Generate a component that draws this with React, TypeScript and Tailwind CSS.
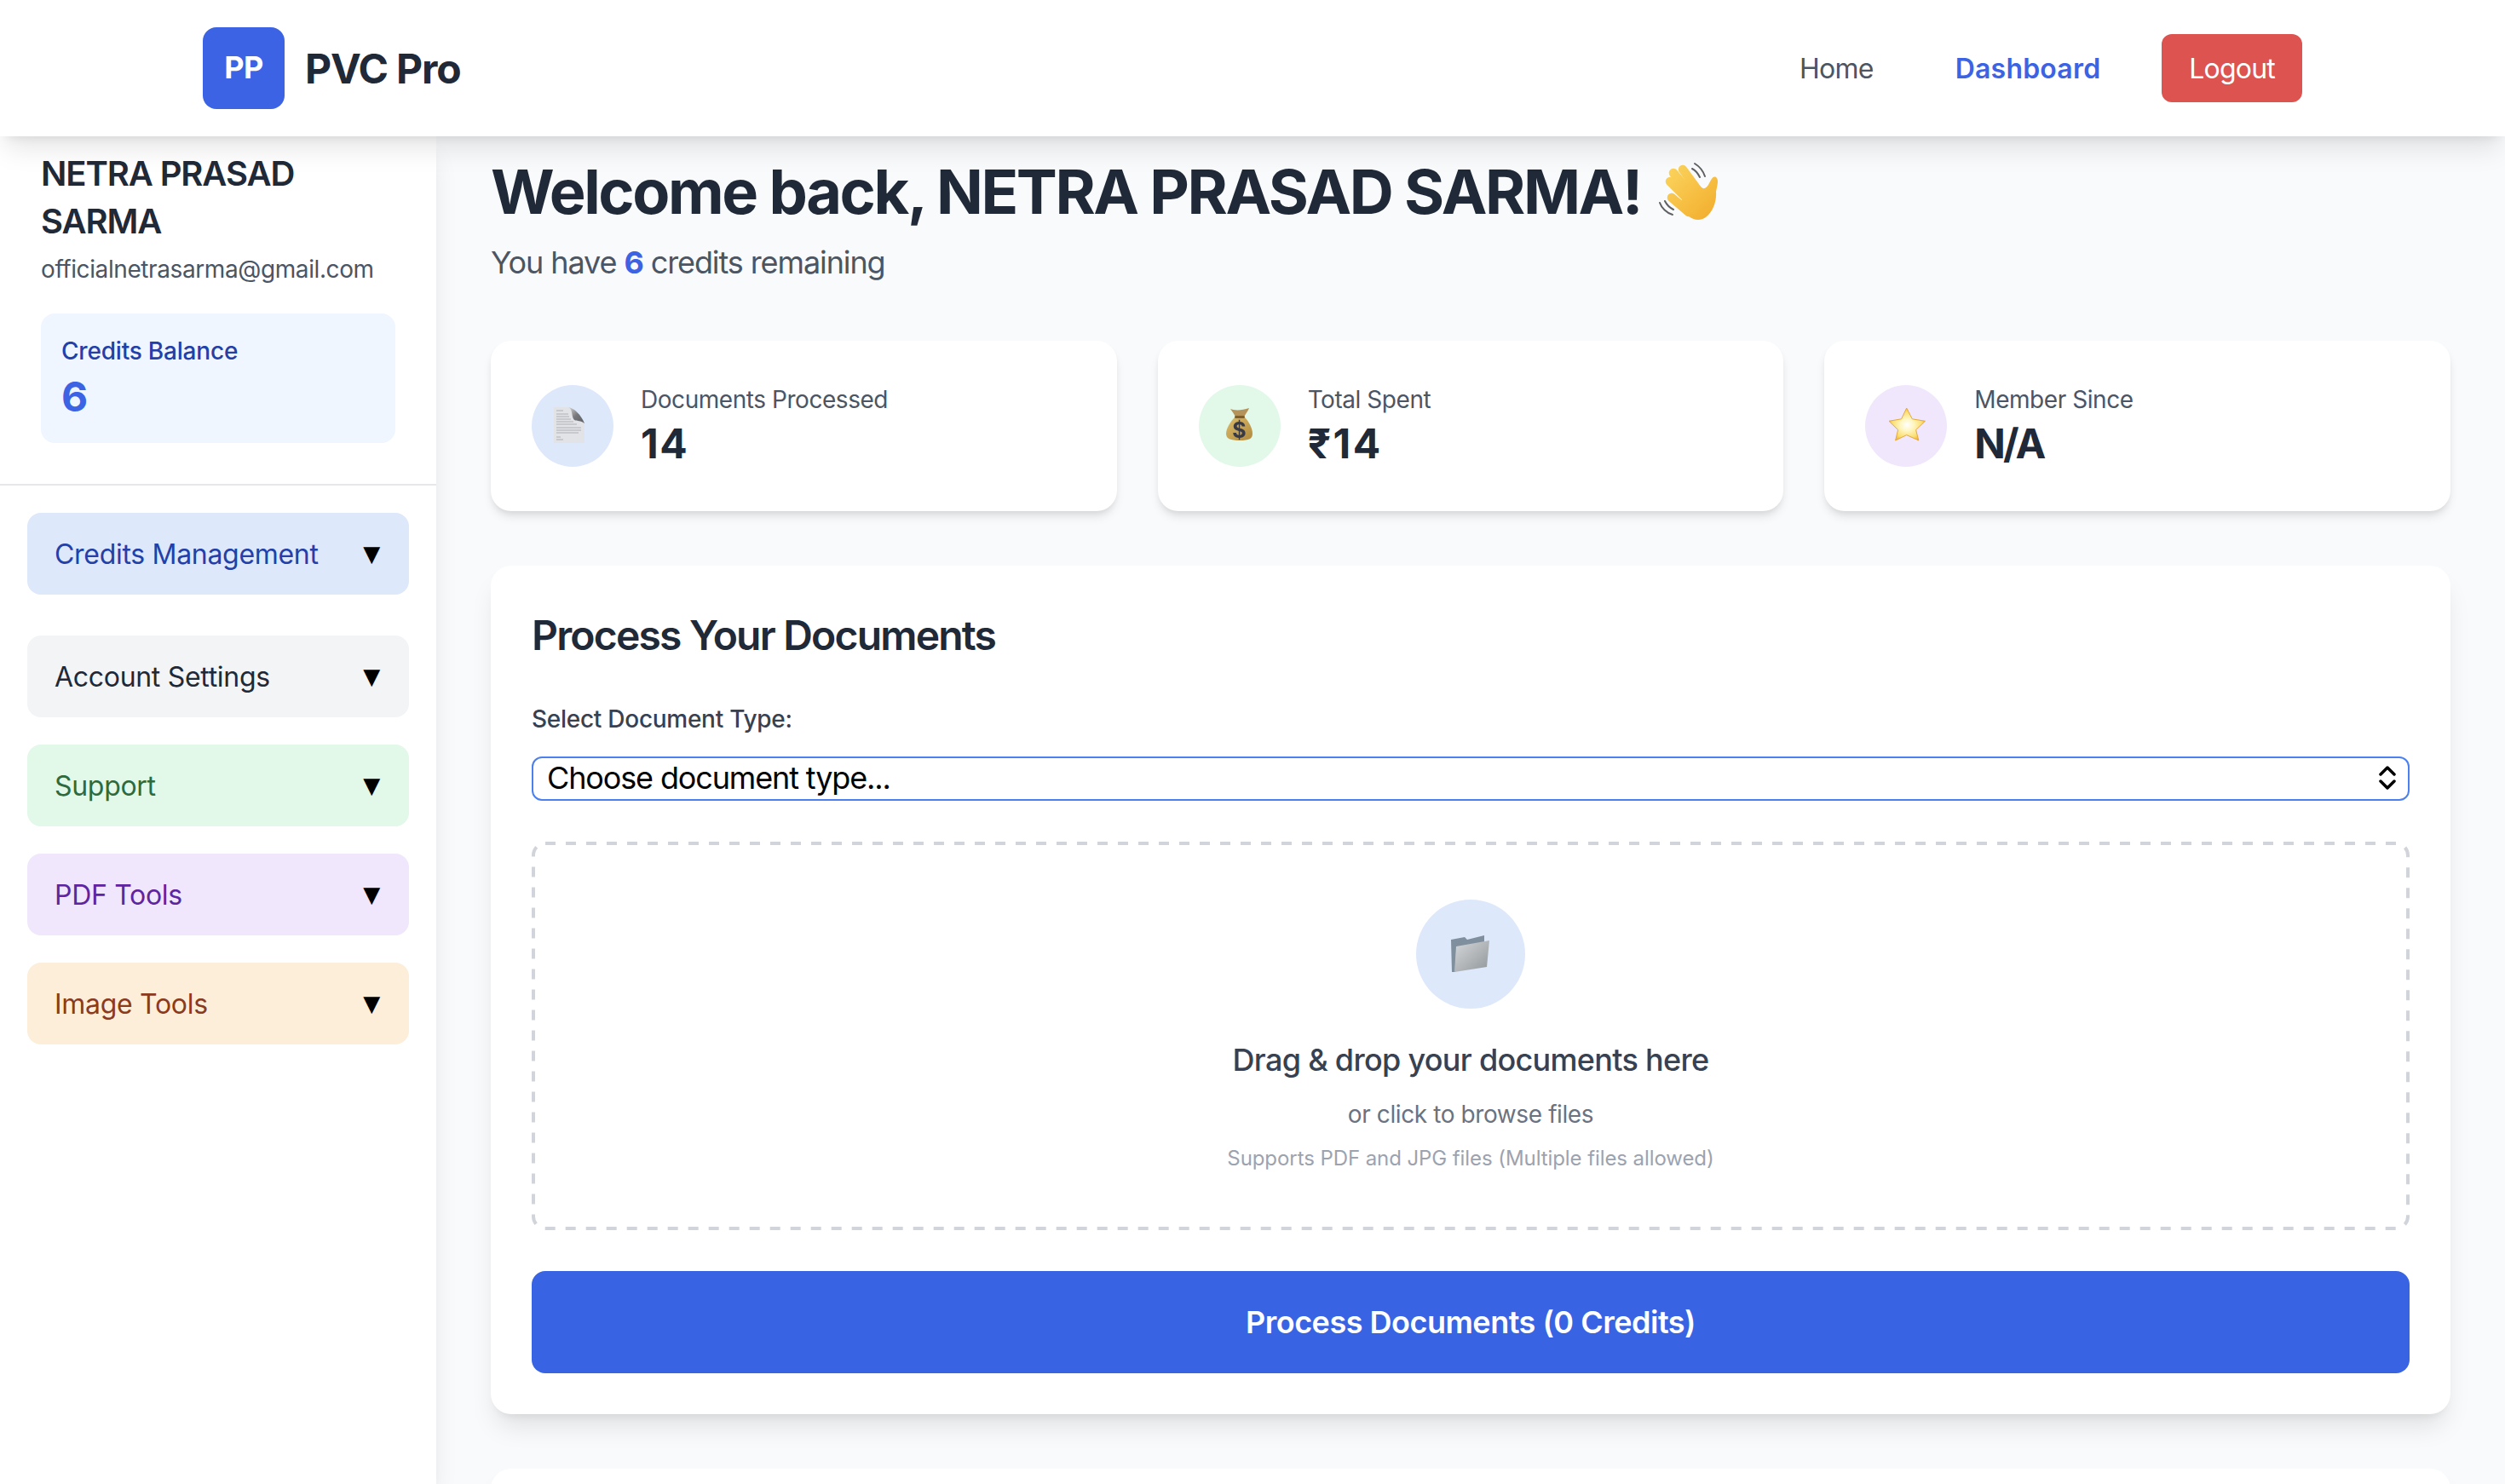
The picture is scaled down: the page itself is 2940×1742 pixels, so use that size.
const cardShadow = 'shadow-[0_8px_12px_-2px_rgba(0,0,0,0.1),0_4px_8px_-4px_rgba(0,0,0,0.1)]';

// Emoji in the original are bitmap glyphs, so they get drawn by hand here
const DocEmoji = () => (
  <svg width="70" height="70" viewBox="0 0 70 70" className="blur-[0.5px]">
    <defs>
      <linearGradient id="fold" x1="0" y1="0" x2="1" y2="1">
        <stop offset="0" stopColor="#d8d8d8" />
        <stop offset="0.5" stopColor="#77787b" />
        <stop offset="1" stopColor="#5c5d60" />
      </linearGradient>
    </defs>
    <path d="M13 13H31C35 13 35 20 37 25C39 29 44 29 49 31V55H13Z" fill="#e2e3e6" />
    <path d="M30 13C37 14 45 22 49 32C44 28 41 30 37 28C33 24 36 16 30 13Z" fill="url(#fold)" />
    <g stroke="#aeb0b5" strokeWidth="1">
      <path d="M16 17H24M16 21H30M16 24H31M16 27H33M16 30H36M16 33H40" />
      <path d="M16 37H45M16 40H45M16 43H42" />
      <path d="M16 48H21M16 51H24" />
    </g>
  </svg>
);

const BagEmoji = () => (
  <svg width="70" height="70" viewBox="0 0 70 70" className="blur-[0.3px]">
    <defs>
      <linearGradient id="bag" x1="0" y1="0" x2="1" y2="1">
        <stop offset="0" stopColor="#dcbc6c" />
        <stop offset="1" stopColor="#b08a3e" />
      </linearGradient>
    </defs>
    <path d="M24 15C28 17 38 17 46 14C45 18 41 21 40 25H30C29 21 26 18 24 15Z" fill="#b4925a" />
    <path d="M29 25H41C46 30 50 38 50 44C50 50 46 52 35 52C24 52 19 50 19 44C19 38 24 30 29 25Z" fill="url(#bag)" />
    <rect x="29" y="23" width="12" height="3" rx="1.5" fill="#7d5e2a" />
    <text x="34.5" y="49" textAnchor="middle" fontFamily="Inter, sans-serif" fontSize="25" fontWeight="700" fill="#3a3a42">$</text>
  </svg>
);

const StarEmoji = () => (
  <svg width="70" height="70" viewBox="0 0 70 70">
    <defs>
      <radialGradient id="star" cx="0.5" cy="0.52" r="0.55">
        <stop offset="0" stopColor="#ffffff" />
        <stop offset="0.35" stopColor="#fff6bf" />
        <stop offset="0.75" stopColor="#fbdc6e" />
        <stop offset="1" stopColor="#eeaa2c" />
      </radialGradient>
    </defs>
    <path d="M35.7 14L42.3 26.8L57.5 29.3L46.6 39.6L49.8 52L35.7 45.6L22.6 52L25.6 39.6L15 29.3L29.6 26.8Z" fill="url(#star)" stroke="#e6a93a" strokeWidth="1" strokeLinejoin="round" />
  </svg>
);

const FolderEmoji = () => (
  <svg width="48" height="46" viewBox="0 0 48 46">
    <defs>
      <linearGradient id="folder" x1="0" y1="0" x2="1" y2="1">
        <stop offset="0" stopColor="#d6d8da" />
        <stop offset="1" stopColor="#90969a" />
      </linearGradient>
    </defs>
    <path d="M1 6L17 3L20 6L40 1V10L6 44H2Z" fill="#7f8f9e" />
    <path d="M7 14L46 7L43 38L5 44Z" fill="url(#folder)" />
  </svg>
);

const WaveEmoji = () => (
  <svg width="90" height="90" viewBox="0 0 90 90" className="shrink-0">
    <defs>
      <linearGradient id="hand" gradientUnits="userSpaceOnUse" x1="25" y1="20" x2="80" y2="78">
        <stop offset="0" stopColor="#fbd35c" />
        <stop offset="1" stopColor="#f2ad2c" />
      </linearGradient>
    </defs>
    <g fill="none" stroke="#5f6062" strokeWidth="2" strokeLinecap="round">
      <path d="M57 13C62 16 67 22 69 28" />
      <path d="M54 19C58 21 61 25 63 29" />
      <path d="M16 59C18 65 24 71 31 73" />
      <path d="M22 57C24 61 28 65 32 67" />
    </g>
    <g stroke="url(#hand)" strokeWidth="10.5" strokeLinecap="round" fill="none">
      <path d="M43 20L62 46" />
      <path d="M32 24L54 50" />
      <path d="M28 34L50 56" />
      <path d="M30 53L50 70" />
    </g>
    <path d="M44 52L64 40C68 44 70 42 73 38C76 33 78 27 82 29C86 32 83 40 82 46C83 58 78 70 70 76C64 80 57 80 50 75L38 62Z" fill="url(#hand)" />
  </svg>
);

const stats = [
  { label: 'Documents Processed', value: '14', valueClass: 'tracking-[1.5px]', circle: 'bg-[#dde8fb]', icon: <DocEmoji /> },
  { label: 'Total Spent', value: '₹14', valueClass: 'tracking-[2.5px]', circle: 'bg-[#e2f8e9]', icon: <BagEmoji /> },
  { label: 'Member Since', value: 'N/A', valueClass: 'tracking-[-3px]', circle: 'bg-[#f0e7fc]', icon: <StarEmoji /> },
];

const menus = [
  { label: 'Credits Management', box: 'bg-[#dde8fb] text-[#2340a8] mb-12' },
  { label: 'Account Settings', box: 'bg-[#f3f4f6] text-[#1f2937] mb-8' },
  { label: 'Support', box: 'bg-[#e2f8e9] text-[#2f6a3d] mb-8' },
  { label: 'PDF Tools', box: 'bg-[#f0e7fc] text-[#5f25a0] mb-8' },
  { label: 'Image Tools', box: 'bg-[#fdeeda] text-[#8c3a1d]' },
];

export default function App() {
  return (
    <div className="h-screen overflow-hidden flex flex-col bg-[#f9fafb] font-['Inter',sans-serif]">
      {/* top bar */}
      <header className="relative z-20 h-[160px] shrink-0 bg-white shadow-[0_20px_30px_-6px_rgba(0,0,0,0.1),0_8px_12px_-8px_rgba(0,0,0,0.1)]">
        <div className="mx-auto max-w-[2560px] h-full px-12 flex items-center justify-between">
          <div className="flex items-center gap-6">
            <div className="w-24 h-24 pb-0.5 rounded-2xl bg-[#3b63e4] flex items-center justify-center text-white text-[36px] font-bold tracking-[-0.5px]">PP</div>
            <span className="pt-0.5 text-[48px] leading-[64px] font-bold tracking-[-1.2px] text-[#1f2937]">PVC Pro</span>
          </div>
          <nav className="flex items-center text-[32px] leading-[48px]">
            <a className="pt-0.5 text-[#4b5563] tracking-[-0.7px]">Home</a>
            <a className="pt-0.5 ml-24 font-semibold text-[#3b63e4] tracking-[0.2px]">Dashboard</a>
            <button className="ml-[72px] h-20 pt-0.5 px-8 rounded-xl bg-[#dd5350] text-white tracking-[-0.8px]">Logout</button>
          </nav>
        </div>
      </header>

      <div className="flex flex-1 min-h-0">
        {/* sidebar */}
        <aside className="relative z-10 w-[512px] shrink-0 bg-white shadow-[0_20px_30px_-6px_rgba(0,0,0,0.1),0_8px_12px_-8px_rgba(0,0,0,0.1)]">
          <div className="pt-4 px-12 pb-12 border-b-2 border-[#e5e7eb]">
            <div className="text-[40px] leading-[56px] font-semibold tracking-[-1.1px] text-[#1f2937]">NETRA PRASAD SARMA</div>
            <div className="mt-2 text-[28px] leading-[40px] tracking-[-0.4px] text-[#4b5563]">officialnetrasarma@gmail.com</div>
            <div className="mt-8 p-6 rounded-2xl bg-[#eff6ff]">
              <div className="text-[28px] leading-[40px] font-medium tracking-[-0.2px] text-[#2340a8]">Credits Balance</div>
              <div className="pt-0.5 -mb-0.5 text-[48px] leading-[64px] font-bold text-[#3b63e4]">6</div>
            </div>
          </div>
          <div className="p-8">
            {menus.map((m) => (
              <button key={m.label} className={`w-full h-24 pl-8 pr-[34px] pt-0.5 rounded-2xl flex items-center justify-between text-[32px] tracking-[-0.3px] ${m.box}`}>
                <span>{m.label}</span>
                <span className="-mt-0.5 font-['DejaVu_Sans',sans-serif] text-[26px] text-black">▼</span>
              </button>
            ))}
          </div>
        </aside>

        {/* main column */}
        <main className="flex-1 min-w-0 pt-6 px-16">
          <div className="flex items-center h-20 mb-4">
            <h1 className="pt-0.5 text-[72px] leading-[80px] font-bold tracking-[-2.4px] text-[#1f2937] whitespace-nowrap">Welcome back, NETRA PRASAD SARMA!</h1>
            <span className="ml-1.5"><WaveEmoji /></span>
          </div>
          <p className="text-[36px] leading-[56px] tracking-[-1.1px] text-[#4b5563]">
            You have <span className="font-bold text-[#3b63e4]">6</span> credits remaining
          </p>

          <div className="mt-16 grid grid-cols-3 gap-12">
            {stats.map((s) => (
              <div key={s.label} className={`h-[200px] px-12 rounded-3xl bg-white flex items-center gap-8 ${cardShadow}`}>
                <div className={`w-24 h-24 rounded-full flex items-center justify-center ${s.circle}`}>{s.icon}</div>
                <div className="pt-0.5">
                  <div className="text-[28px] leading-[40px] tracking-[-0.45px] text-[#4b5563]">{s.label}</div>
                  <div className={`text-[48px] leading-[64px] font-bold text-[#1f2937] ${s.valueClass}`}>{s.value}</div>
                </div>
              </div>
            ))}
          </div>

          <section className="mt-16 p-12 rounded-3xl bg-white shadow-[0_20px_30px_-6px_rgba(0,0,0,0.1),0_8px_12px_-8px_rgba(0,0,0,0.1)]">
            <h2 className="pt-0.5 text-[48px] leading-[64px] font-semibold tracking-[-1.8px] text-[#1f2937] mb-[46px]">Process Your Documents</h2>
            <label className="block text-[28px] leading-[40px] font-medium tracking-[-0.27px] text-[#374151] mb-6">Select Document Type:</label>
            <div role="combobox" aria-expanded="false" className="h-[52px] mb-12 pl-[16px] pr-[14px] pb-0.5 rounded-xl border-2 border-[#4b80ee] bg-white flex items-center justify-between text-[36px] leading-[44px] tracking-[-1.14px] text-black">
              <span>Choose document type...</span>
              <svg width="20" height="28" viewBox="0 0 20 28" fill="none" stroke="#000" strokeWidth="3.5" strokeLinecap="round" strokeLinejoin="round">
                <path d="M2 10L10 2L18 10" />
                <path d="M2 18L10 26L18 18" />
              </svg>
            </div>

            <div className="relative h-[456px] pt-[68px] flex flex-col items-center">
              {/* dashed outline, browser dashes come out too short at this size */}
              <svg className="absolute inset-0" width="2204" height="456" viewBox="0 0 2204 456" fill="none">
                <rect x="2" y="2" width="2200" height="452" rx="14" stroke="#d1d5db" strokeWidth="4" strokeDasharray="12 12" />
              </svg>
              <div className="w-32 h-32 rounded-full bg-[#dde8fb] flex items-center justify-center"><FolderEmoji /></div>
              <div className="mt-8 text-[36px] leading-[56px] font-medium tracking-[-0.7px] text-[#374151]">Drag &amp; drop your documents here</div>
              <div className="mt-4 text-[28px] leading-[40px] tracking-[-0.4px] text-[#6b7280]">or click to browse files</div>
              <div className="mt-4 text-[24px] leading-[32px] tracking-[-0.08px] text-[#9ca3af]">Supports PDF and JPG files (Multiple files allowed)</div>
            </div>

            <button className="mt-12 w-full h-[120px] rounded-2xl bg-[#3863e3] text-white text-[36px] font-semibold tracking-[-0.5px]">Process Documents (0 Credits)</button>
          </section>

          <section className="mt-16 h-[400px] rounded-3xl bg-white shadow-[0_20px_30px_-6px_rgba(0,0,0,0.1),0_8px_12px_-8px_rgba(0,0,0,0.1)]" />
        </main>
      </div>
    </div>
  );
}
